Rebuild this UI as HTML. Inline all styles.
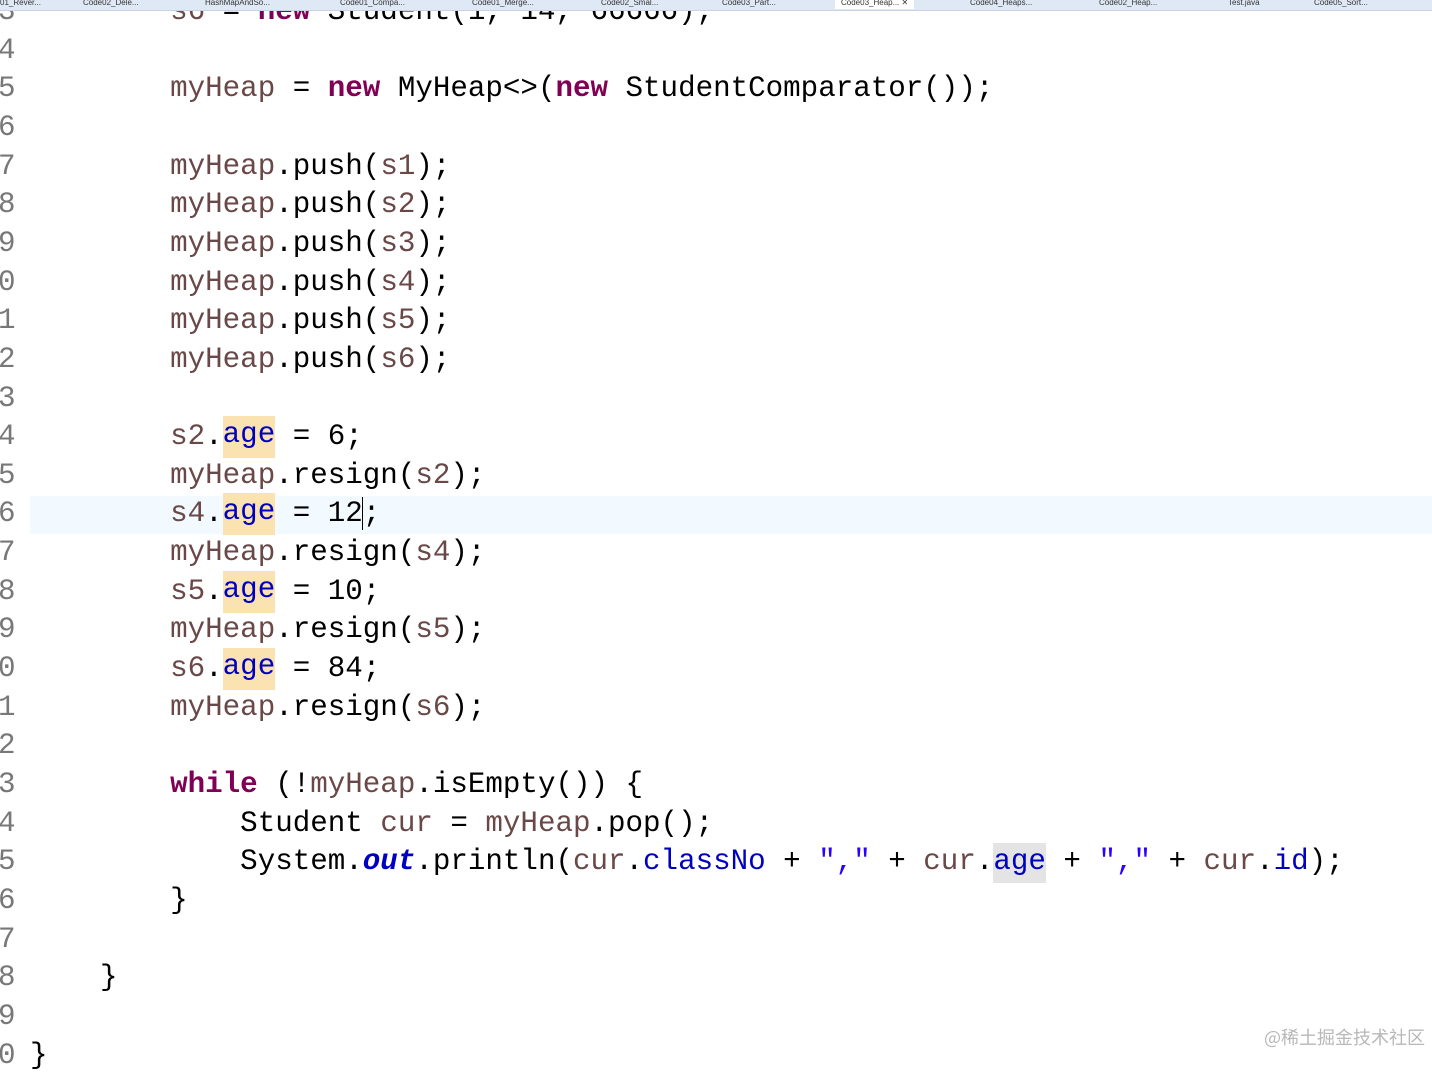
<!DOCTYPE html>
<html><head><meta charset="utf-8"><style>
html,body{margin:0;padding:0;}
body{width:1432px;height:1053px;background:#fff;position:relative;overflow:hidden;font-family:"Liberation Mono",monospace;}
.tabs{position:absolute;left:0;top:0;width:1432px;height:10px;background:#dfe9f5;border-bottom:1px solid #c7d3e3;font-family:"Liberation Sans",sans-serif;font-size:8px;line-height:8px;color:#333;white-space:nowrap;overflow:hidden;z-index:5}
.tabs span{position:absolute;top:-1px}
.tabs .act{background:#fff;height:10px;padding:0 6px}
.wrap{position:absolute;left:0;top:2px;width:1432px;height:1060px}
.r{position:absolute;left:0;height:38.65px;line-height:38.65px;font-size:29.2px;white-space:pre;color:#000;width:1432px}
.n{position:absolute;left:-2px;color:#787878}
.c{position:absolute;left:30px}
.k{color:#7f0055;font-weight:bold}
.v{color:#6a4848}
.f{color:#0000c0}
.s{color:#2a00ff}
.o{color:#0000c0;font-style:italic;font-weight:bold}
.h{background:#fae3b0;display:inline-block;height:42px;line-height:38.65px;vertical-align:top;margin-top:-2px}
.g{background:#e4e4e4;display:inline-block;height:40px;line-height:38.65px;vertical-align:top}
.cur{position:absolute;left:30px;width:1402px;top:496px;height:38px;background:#f2faff}
.wm{position:absolute;right:7px;top:1024px;font-family:"Noto Sans CJK SC",sans-serif;font-size:18px;color:#b8b8b8}
</style></head><body>
<div class="cur"></div>
<div class="wrap">
<div class="r" style="top:-9px"><span class="n">3</span><span class="c">        <span class="v">s6</span> = <span class="k">new</span> Student(1, 14, 66666);</span></div>
<div class="r" style="top:29.6px"><span class="n">4</span></div>
<div class="r" style="top:68.3px"><span class="n">5</span><span class="c">        <span class="v">myHeap</span> = <span class="k">new</span> MyHeap&lt;&gt;(<span class="k">new</span> StudentComparator());</span></div>
<div class="r" style="top:107px"><span class="n">6</span></div>
<div class="r" style="top:145.6px"><span class="n">7</span><span class="c">        <span class="v">myHeap</span>.push(<span class="v">s1</span>);</span></div>
<div class="r" style="top:184.2px"><span class="n">8</span><span class="c">        <span class="v">myHeap</span>.push(<span class="v">s2</span>);</span></div>
<div class="r" style="top:222.9px"><span class="n">9</span><span class="c">        <span class="v">myHeap</span>.push(<span class="v">s3</span>);</span></div>
<div class="r" style="top:261.5px"><span class="n">0</span><span class="c">        <span class="v">myHeap</span>.push(<span class="v">s4</span>);</span></div>
<div class="r" style="top:300.2px"><span class="n">1</span><span class="c">        <span class="v">myHeap</span>.push(<span class="v">s5</span>);</span></div>
<div class="r" style="top:338.8px"><span class="n">2</span><span class="c">        <span class="v">myHeap</span>.push(<span class="v">s6</span>);</span></div>
<div class="r" style="top:377.5px"><span class="n">3</span></div>
<div class="r" style="top:416.1px"><span class="n">4</span><span class="c">        <span class="v">s2</span>.<span class="f h">age</span> = 6;</span></div>
<div class="r" style="top:454.8px"><span class="n">5</span><span class="c">        <span class="v">myHeap</span>.resign(<span class="v">s2</span>);</span></div>
<div class="r" style="top:493.4px"><span class="n">6</span><span class="c">        <span class="v">s4</span>.<span class="f h">age</span> = 12<span style="border-left:1.5px solid #000;margin-left:-1px"></span>;</span></div>
<div class="r" style="top:532.1px"><span class="n">7</span><span class="c">        <span class="v">myHeap</span>.resign(<span class="v">s4</span>);</span></div>
<div class="r" style="top:570.7px"><span class="n">8</span><span class="c">        <span class="v">s5</span>.<span class="f h">age</span> = 10;</span></div>
<div class="r" style="top:609.4px"><span class="n">9</span><span class="c">        <span class="v">myHeap</span>.resign(<span class="v">s5</span>);</span></div>
<div class="r" style="top:648px"><span class="n">0</span><span class="c">        <span class="v">s6</span>.<span class="f h">age</span> = 84;</span></div>
<div class="r" style="top:686.7px"><span class="n">1</span><span class="c">        <span class="v">myHeap</span>.resign(<span class="v">s6</span>);</span></div>
<div class="r" style="top:725.3px"><span class="n">2</span></div>
<div class="r" style="top:764px"><span class="n">3</span><span class="c">        <span class="k">while</span> (!<span class="v">myHeap</span>.isEmpty()) {</span></div>
<div class="r" style="top:802.6px"><span class="n">4</span><span class="c">            Student <span class="v">cur</span> = <span class="v">myHeap</span>.pop();</span></div>
<div class="r" style="top:841.3px"><span class="n">5</span><span class="c">            System.<span class="o">out</span>.println(<span class="v">cur</span>.<span class="f">classNo</span> + <span class="s">","</span> + <span class="v">cur</span>.<span class="f g">age</span> + <span class="s">","</span> + <span class="v">cur</span>.<span class="f">id</span>);</span></div>
<div class="r" style="top:879.9px"><span class="n">6</span><span class="c">        }</span></div>
<div class="r" style="top:918.6px"><span class="n">7</span></div>
<div class="r" style="top:957.2px"><span class="n">8</span><span class="c">    }</span></div>
<div class="r" style="top:995.9px"><span class="n">9</span></div>
<div class="r" style="top:1034.5px"><span class="n">0</span><span class="c">}</span></div>
</div>
<div class="tabs">
<span style="left:0">01_Rever...</span>
<span style="left:83px">Code02_Dele...</span>
<span style="left:205px">HashMapAndSo...</span>
<span style="left:340px">Code01_Compa...</span>
<span style="left:472px">Code01_Merge...</span>
<span style="left:601px">Code02_Smal...</span>
<span style="left:722px">Code03_Part...</span>
<span class="act" style="left:835px">Code03_Heap... ✕</span>
<span style="left:970px">Code04_Heaps...</span>
<span style="left:1099px">Code02_Heap...</span>
<span style="left:1228px">Test.java</span>
<span style="left:1314px">Code05_Sort...</span>
</div>
<div class="wm">@稀土掘金技术社区</div>
</body></html>
